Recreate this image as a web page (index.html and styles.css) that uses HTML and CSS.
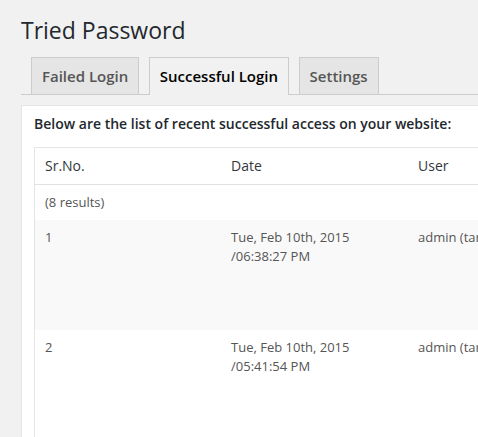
FILE: index.html
```html
<!DOCTYPE html>
<html lang="en">
<head>
<meta charset="utf-8">
<title>Tried Password</title>
<link rel="stylesheet" href="styles.css">
</head>
<body>
<div class="wrap">
  <h1 class="title">Tried Password</h1>
  <nav class="tabs">
    <a class="tab" href="#">Failed Login</a>
    <a class="tab active" href="#">Successful Login</a>
    <a class="tab" href="#">Settings</a>
  </nav>
  <section class="panel">
    <p class="intro">Below are the list of recent successful access on your website:</p>
    <table class="list">
      <colgroup>
        <col class="col-no"><col class="col-date"><col class="col-user"><col class="col-ip"><col class="col-agent">
      </colgroup>
      <thead>
        <tr><th>Sr.No.</th><th>Date</th><th>User</th><th>IP Address</th><th>Browser</th></tr>
      </thead>
      <tbody>
        <tr class="count"><td colspan="5">(8 results)</td></tr>
        <tr class="entry alt"><td>1</td><td>Tue, Feb 10th, 2015<br>/06:38:27 PM</td><td>admin (tarun)</td><td>127.0.0.1</td><td>Mozilla/5.0</td></tr>
        <tr class="entry"><td>2</td><td>Tue, Feb 10th, 2015<br>/05:41:54 PM</td><td>admin (tarun)</td><td>127.0.0.1</td><td>Mozilla/5.0</td></tr>
      </tbody>
    </table>
  </section>
</div>
</body>
</html>
```
FILE: styles.css
```css
html, body {
  margin: 0;
  padding: 0;
  height: 100%;
  overflow: hidden;
  background: #f1f1f1;
}
body {
  font-family: "Open Sans", "Noto Sans", sans-serif;
  color: #444;
}
.wrap {
  padding-left: 21px;
  overflow: hidden;
}
.title {
  margin: 16px 0 0 0;
  font-size: 23px;
  line-height: 29px;
  font-weight: 400;
  color: #23282d;
}
.tabs {
  display: flex;
  gap: 9.5px;
  margin-top: 12px;
  padding-left: 10px;
  border-bottom: 1px solid #ccc;
}
.tab {
  display: block;
  padding: 6px 10px;
  font-size: 15px;
  line-height: 24px;
  font-weight: 600;
  color: #555;
  background: #e5e5e5;
  border: 1px solid #ccc;
  border-bottom: none;
  text-decoration: none;
  white-space: nowrap;
}
.tab.active {
  background: #f1f1f1;
  color: #000;
  margin-bottom: -1px;
  padding-bottom: 7px;
}
.panel {
  margin-top: 10px;
  width: 760px;
  background: #fff;
  border: 1px solid #e5e5e5;
  padding: 7px 12px 40px;
}
.intro {
  margin: 0 0 13px;
  font-size: 14px;
  line-height: 21px;
  font-weight: 600;
  color: #23282d;
}
.list {
  table-layout: fixed;
  width: 748px;
  border-spacing: 0;
  border: 1px solid #e5e5e5;
}
.col-no { width: 186px; }
.col-date { width: 187px; }
.col-user { width: 187px; }
.col-ip { width: 94px; }
.list th {
  text-align: left;
  font-weight: 400;
  font-size: 14px;
  line-height: 1.4em;
  padding: 8px 10px;
  color: #32373c;
  border-bottom: 1px solid #e1e1e1;
}
.list td {
  vertical-align: top;
  font-size: 13px;
  line-height: 1.5em;
  padding: 8px 10px;
  color: #555;
  white-space: nowrap;
}
.entry {
  height: 110px;
}
.entry td {
  line-height: 18.5px;
}
.alt {
  background: #f9f9f9;
}
```
